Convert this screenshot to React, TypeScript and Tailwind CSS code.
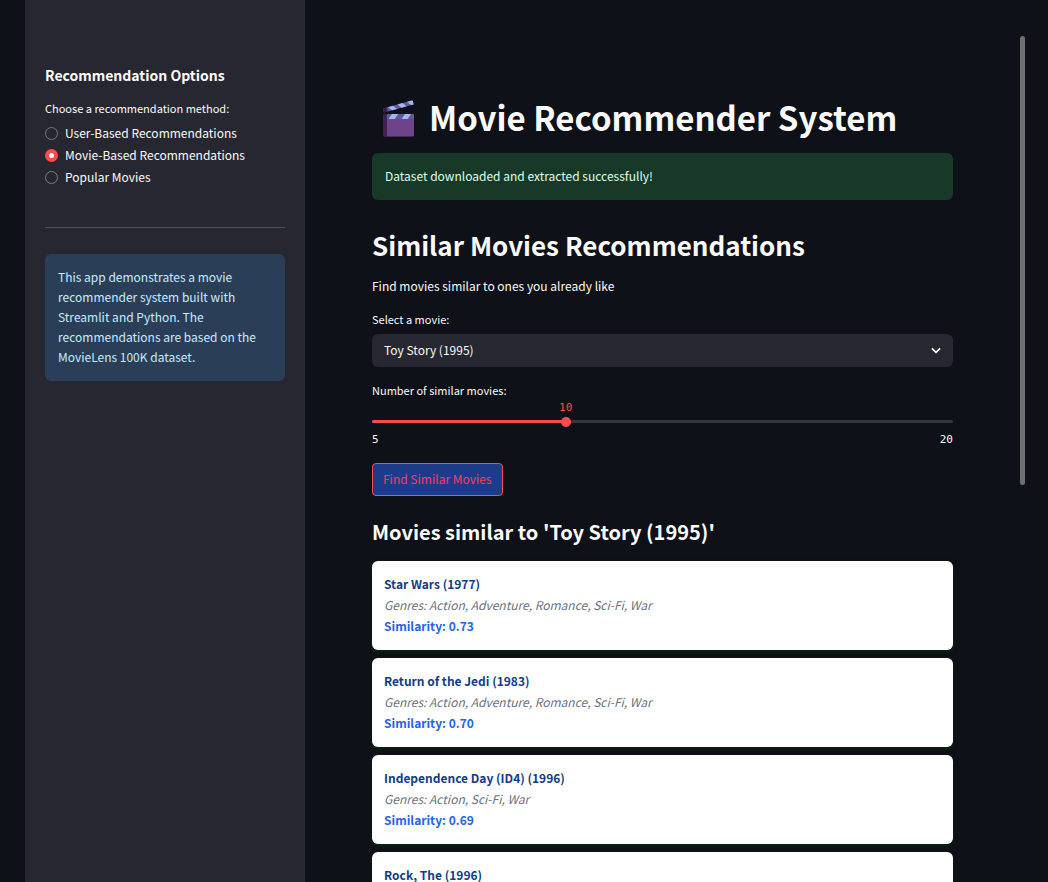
import { useState } from "react";

const methods = ["User-Based Recommendations", "Movie-Based Recommendations", "Popular Movies"];

type Movie = { title: string; genres?: string; similarity?: string };

const movies: Movie[] = [
  { title: "Star Wars (1977)", genres: "Action, Adventure, Romance, Sci-Fi, War", similarity: "0.73" },
  { title: "Return of the Jedi (1983)", genres: "Action, Adventure, Romance, Sci-Fi, War", similarity: "0.70" },
  { title: "Independence Day (ID4) (1996)", genres: "Action, Sci-Fi, War", similarity: "0.69" },
  { title: "Rock, The (1996)" },
];

function ClapperIcon() {
  return (
    <svg viewBox="0 -4 34 42" className="h-[42px] w-[34px] shrink-0" aria-hidden="true">
      <path d="M1.2 8.6 L29.5 0.6 Q30.6 0.3 30.9 1.4 L31.7 4.4 L3 12.3 Q1.6 12.6 1.3 11.4 Z" fill="#635994" />
      <path d="M1.2 8.6 L4.6 7.6 L5.7 11.6 L3 12.3 Q1.6 12.6 1.3 11.4 Z" fill="#3a1d4a" />
      <path d="M6 7.2 L11 5.8 L15 8.9 L10 10.3 Z M15.5 4.5 L20.5 3.1 L24.5 6.3 L19.5 7.7 Z M25 1.9 L29.5 0.6 Q30.6 0.3 30.9 1.4 L31.7 4.4 L29 5.1 Z" fill="#a6b4f5" />
      <path d="M1 15 Q1 14 2 14 H32 V35 Q32 37 30 37 H3 Q1 37 1 35 Z" fill="#402150" />
      <path d="M5 14 H32 V35 Q32 36.2 30.8 36.2 H6.2 Q5 36.2 5 35 Z" fill="#6d4489" />
      <path d="M5 14 H32 V19 H5 Z" fill="#635994" />
      <path d="M10 14 H16 L12.6 19 H6.6 Z M23 14 H29 L25.6 19 H19.6 Z" fill="#a6b4f5" />
    </svg>
  );
}

function Sidebar() {
  const [method, setMethod] = useState(methods[1]);
  return (
    <aside className="w-[280px] shrink-0 bg-[#262730] px-5 pt-[63px]">
      <h2 className="text-[14px] leading-6 font-bold">Recommendation Options</h2>
      <fieldset className="mt-[13px]">
        <legend className="text-[11px] leading-4">Choose a recommendation method:</legend>
        <div className="mt-[6px] flex flex-col">
          {methods.map((m) => (
            <label key={m} className="flex h-[22px] items-center gap-[7px] text-[12px] leading-5">
              <input
                type="radio"
                name="method"
                checked={method === m}
                onChange={() => setMethod(m)}
                className="size-[13px] shrink-0 appearance-none rounded-full border border-[#7a7b82] checked:border-4 checked:border-[#ff4b4b] checked:bg-white"
              />
              {m}
            </label>
          ))}
        </div>
      </fieldset>
      <hr className="mt-[39px] border-[#515259]" />
      <p className="mt-[26px] rounded-md bg-[#2a3e57] px-[13px] pt-[13px] pb-[14px] text-[12px] leading-5 text-[#c7ebff]">
        This app demonstrates a movie recommender system built with Streamlit and Python. The recommendations are
        based on the MovieLens 100K dataset.
      </p>
    </aside>
  );
}

function CountSlider() {
  const min = 5;
  const max = 20;
  const [count, setCount] = useState(10);
  const percent = `${((count - min) / (max - min)) * 100}%`;
  return (
    <div className="mt-[15px]">
      <label htmlFor="count" className="block text-[11px] leading-4">
        Number of similar movies:
      </label>
      <div className="relative mt-[18px] flex h-[11px] items-center font-['DejaVu_Sans_Mono',monospace] text-[11px] leading-4">
        <output
          htmlFor="count"
          className="absolute bottom-full -translate-x-1/2 text-[#ff4b4b]"
          style={{ left: percent }}
        >
          {count}
        </output>
        <div className="h-[3px] w-full overflow-hidden rounded-sm bg-[#34373e]">
          <div className="h-full bg-[#ff4b4b]" style={{ width: percent }} />
        </div>
        <input
          id="count"
          type="range"
          min={min}
          max={max}
          value={count}
          onChange={(e) => setCount(Number(e.target.value))}
          className="absolute -inset-x-[5px] h-[11px] appearance-none bg-transparent [&::-webkit-slider-thumb]:size-[10px] [&::-webkit-slider-thumb]:appearance-none [&::-webkit-slider-thumb]:rounded-full [&::-webkit-slider-thumb]:bg-[#ff4b4b]"
        />
      </div>
      <div className="mt-[5px] flex justify-between font-['DejaVu_Sans_Mono',monospace] text-[11px] leading-4">
        <span>{min}</span>
        <span>{max}</span>
      </div>
    </div>
  );
}

export default function App() {
  return (
    <div className="flex h-screen overflow-hidden bg-[#0e1117] pl-[25px] font-['Noto_Sans_CJK_SC','Noto_Sans',sans-serif] text-[#fafafa]">
      <Sidebar />
      <main className="min-w-0 flex-1 overflow-hidden px-[67px] pt-[95px]">
        <h1 className="flex items-center gap-[13px] pl-[10px] text-[33px] leading-[44px] font-bold whitespace-nowrap">
          <ClapperIcon />
          Movie Recommender System
        </h1>
        <p className="mt-[14px] rounded-md bg-[#183927] px-[13px] pt-3 pb-[14px] text-[12px] leading-[21px] text-[#dffde9]">
          Dataset downloaded and extracted successfully!
        </p>
        <h2 className="mt-[25px] text-[26px] leading-10 font-bold">Similar Movies Recommendations</h2>
        <p className="mt-[11px] text-[12px] leading-5">Find movies similar to ones you already like</p>
        <label htmlFor="movie" className="mt-[15px] block text-[11px] leading-4">
          Select a movie:
        </label>
        <div className="relative mt-[7px]">
          <select
            id="movie"
            className="block h-[33px] w-full appearance-none rounded-md bg-[#262730] px-3 pb-[2px] text-[12px] leading-5"
          >
            {["Toy Story (1995)", ...movies.map((m) => m.title)].map((title) => (
              <option key={title}>{title}</option>
            ))}
          </select>
          <svg viewBox="0 0 10 8" className="pointer-events-none absolute top-[13px] right-3 h-2 w-[10px]" aria-hidden="true">
            <path d="M1.4 1.8 L5 5.4 L8.6 1.8" fill="none" stroke="#fafafa" strokeWidth="1.7" strokeLinecap="round" strokeLinejoin="round" />
          </svg>
        </div>
        <CountSlider />
        <button
          type="button"
          className="mt-[15px] block h-[33px] rounded-sm border border-[#ff4b4b] bg-[#1e3a8a] px-[10px] pb-[2px] text-[12px] leading-5 text-[#f43f5e]"
        >
          Find Similar Movies
        </button>
        <h3 className="mt-[22px] text-[20px] leading-7 font-bold">Movies similar to 'Toy Story (1995)'</h3>
        <ul className="mt-[15px] flex flex-col gap-2">
          {movies.map((m) => (
            <li
              key={m.title}
              className="min-h-[89px] rounded-md bg-white px-3 pt-3 text-[12px] leading-[21px] shadow-[0_2px_4px_#0a2412]"
            >
              <h4 className="font-bold text-[#0f3d8c]">{m.title}</h4>
              {m.genres && <p className="text-[#6b7280] italic">Genres: {m.genres}</p>}
              {m.similarity && <p className="font-bold text-[#2563eb]">Similarity: {m.similarity}</p>}
            </li>
          ))}
        </ul>
      </main>
      <div className="mt-9 mr-[23px] h-[449px] w-[5px] shrink-0 rounded-full bg-[#6f6f70]" />
    </div>
  );
}
